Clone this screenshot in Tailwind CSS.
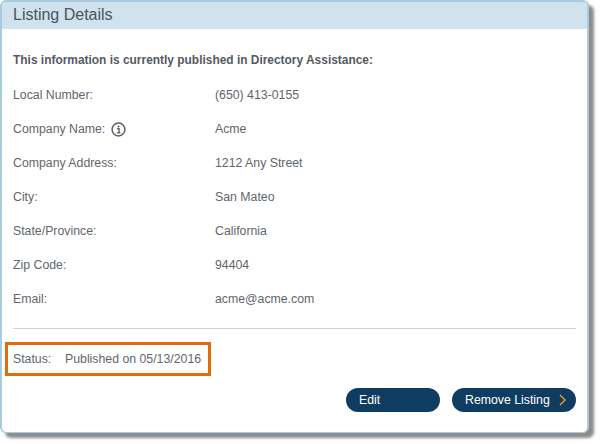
<!doctype html>
<html lang="en">
<head>
    <meta charset="UTF-8">
    <title>Listing Details</title>
    <script src="https://cdn.jsdelivr.net/npm/@tailwindcss/browser@4"></script>
</head>
<body class="w-[600px] h-[444px] overflow-hidden bg-white font-['Liberation_Sans',Arial,sans-serif] text-[12.3px] text-[#62666c]">

<div class="w-[589px] h-[433px] flex flex-col bg-white border-2 border-b-[1px] border-[#a9cbe0] rounded-[6px] shadow-[5px_5px_3px_#8c8c8c]">
    <header class="h-[27px] shrink-0 bg-[#cfe2ee] rounded-t-[4px] pl-[11px] pb-[2px] flex items-center text-[16px] text-[#4a5560]">
        Listing Details
    </header>

    <main class="flex-1 flex flex-col px-[11px]">
        <p class="mt-[24px] h-[14px] leading-[14px] font-bold text-[11.93px] text-[#555a62]">This information is currently published in Directory Assistance:</p>

        <dl class="mt-[11px] grid grid-cols-[202px_1fr] auto-rows-[34px] items-center">
            <dt>Local Number:</dt>
            <dd>(650) 413-0155</dd>
            <dt class="flex items-center gap-[6px]">
                Company Name:
                <svg class="w-[15px] h-[15px]" viewBox="0 0 14 14" fill="none">
                    <circle cx="7" cy="7" r="6" stroke="#5a5e64" stroke-width="1.4"/>
                    <circle cx="7" cy="4.2" r="1" fill="#5a5e64"/>
                    <path d="M5.6 6.2H7.5V9.8M5.4 10.1H8.8" stroke="#5a5e64" stroke-width="1.3"/>
                </svg>
            </dt>
            <dd>Acme</dd>
            <dt>Company Address:</dt>
            <dd>1212 Any Street</dd>
            <dt>City:</dt>
            <dd>San Mateo</dd>
            <dt>State/Province:</dt>
            <dd>California</dd>
            <dt>Zip Code:</dt>
            <dd>94404</dd>
            <dt>Email:</dt>
            <dd>acme@acme.com</dd>
        </dl>

        <hr class="mt-[12px] border-t border-[#d4d4d4]">

        <div class="mt-[13px] -ml-[8px] w-[206px] h-[34px] border-[3px] border-[#e06c0c] flex items-center pl-[5px]">
            <span class="w-[52px]">Status:</span>
            <span>Published on 05/13/2016</span>
        </div>

        <div class="mt-[12px] flex justify-end gap-[12px]">
            <button class="w-[94px] h-[24px] rounded-full bg-[#0f3d61] text-white text-left pl-[13px]">Edit</button>
            <button class="w-[124px] h-[24px] rounded-full bg-[#0f3d61] text-white flex items-center pl-[13px]">
                Remove Listing
                <svg class="ml-[9px] w-[7px] h-[12px]" viewBox="0 0 7 12" fill="none">
                    <path d="M1 1L6 6L1 11" stroke="#f29a1f" stroke-width="1.4"/>
                </svg>
            </button>
        </div>
    </main>
</div>

</body>
</html>
